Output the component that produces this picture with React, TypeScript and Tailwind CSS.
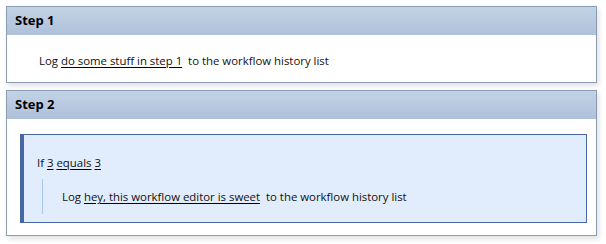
import React from 'react';

const font = { fontFamily: '"Open Sans", "Noto Sans", sans-serif' };

function Arg({ children }: { children: React.ReactNode }) {
  return <span className="underline underline-offset-[2px] decoration-[#000]">{children}</span>;
}

function StepCard({ title, children }: { title: string; children: React.ReactNode }) {
  return (
    <div className="border border-[#8b9bb1] bg-white shadow-[2px_3px_5px_rgba(0,0,0,0.12)]">
      <div className="h-[28px] flex items-center px-[8px] bg-gradient-to-b from-[#c3d3e6] to-[#aec1d9] text-[13px] font-bold text-black">
        {title}
      </div>
      {children}
    </div>
  );
}

export default function App() {
  return (
    <div className="w-[606px] h-[244px] bg-white flex flex-col gap-[7px] pl-[6px] pr-[9px] pt-[6px] text-[11.4px] text-[#111]" style={font}>
      <StepCard title="Step 1">
        <div className="h-[47px] flex items-center pl-[32px] pt-[4px]">
          <span>
            Log <Arg>do some stuff in step 1</Arg>&nbsp; to the workflow history list
          </span>
        </div>
      </StepCard>
      <StepCard title="Step 2">
        <div className="pt-[15px] pb-[12px] pl-[13px] pr-[9px]">
          <div className="bg-[#e1edfc] border border-[#4767a5] border-l-4 pl-[13px] pt-[19px] pb-[8px]">
            <div>
              If <Arg>3</Arg> <Arg>equals</Arg> <Arg>3</Arg>
            </div>
            <div className="mt-[8px] ml-[5px] border-l border-[#a9c6ec] h-[35px] flex items-center pl-[19px]">
              <span>
                Log <Arg>hey, this workflow editor is sweet</Arg>&nbsp; to the workflow history list
              </span>
            </div>
          </div>
        </div>
      </StepCard>
    </div>
  );
}
